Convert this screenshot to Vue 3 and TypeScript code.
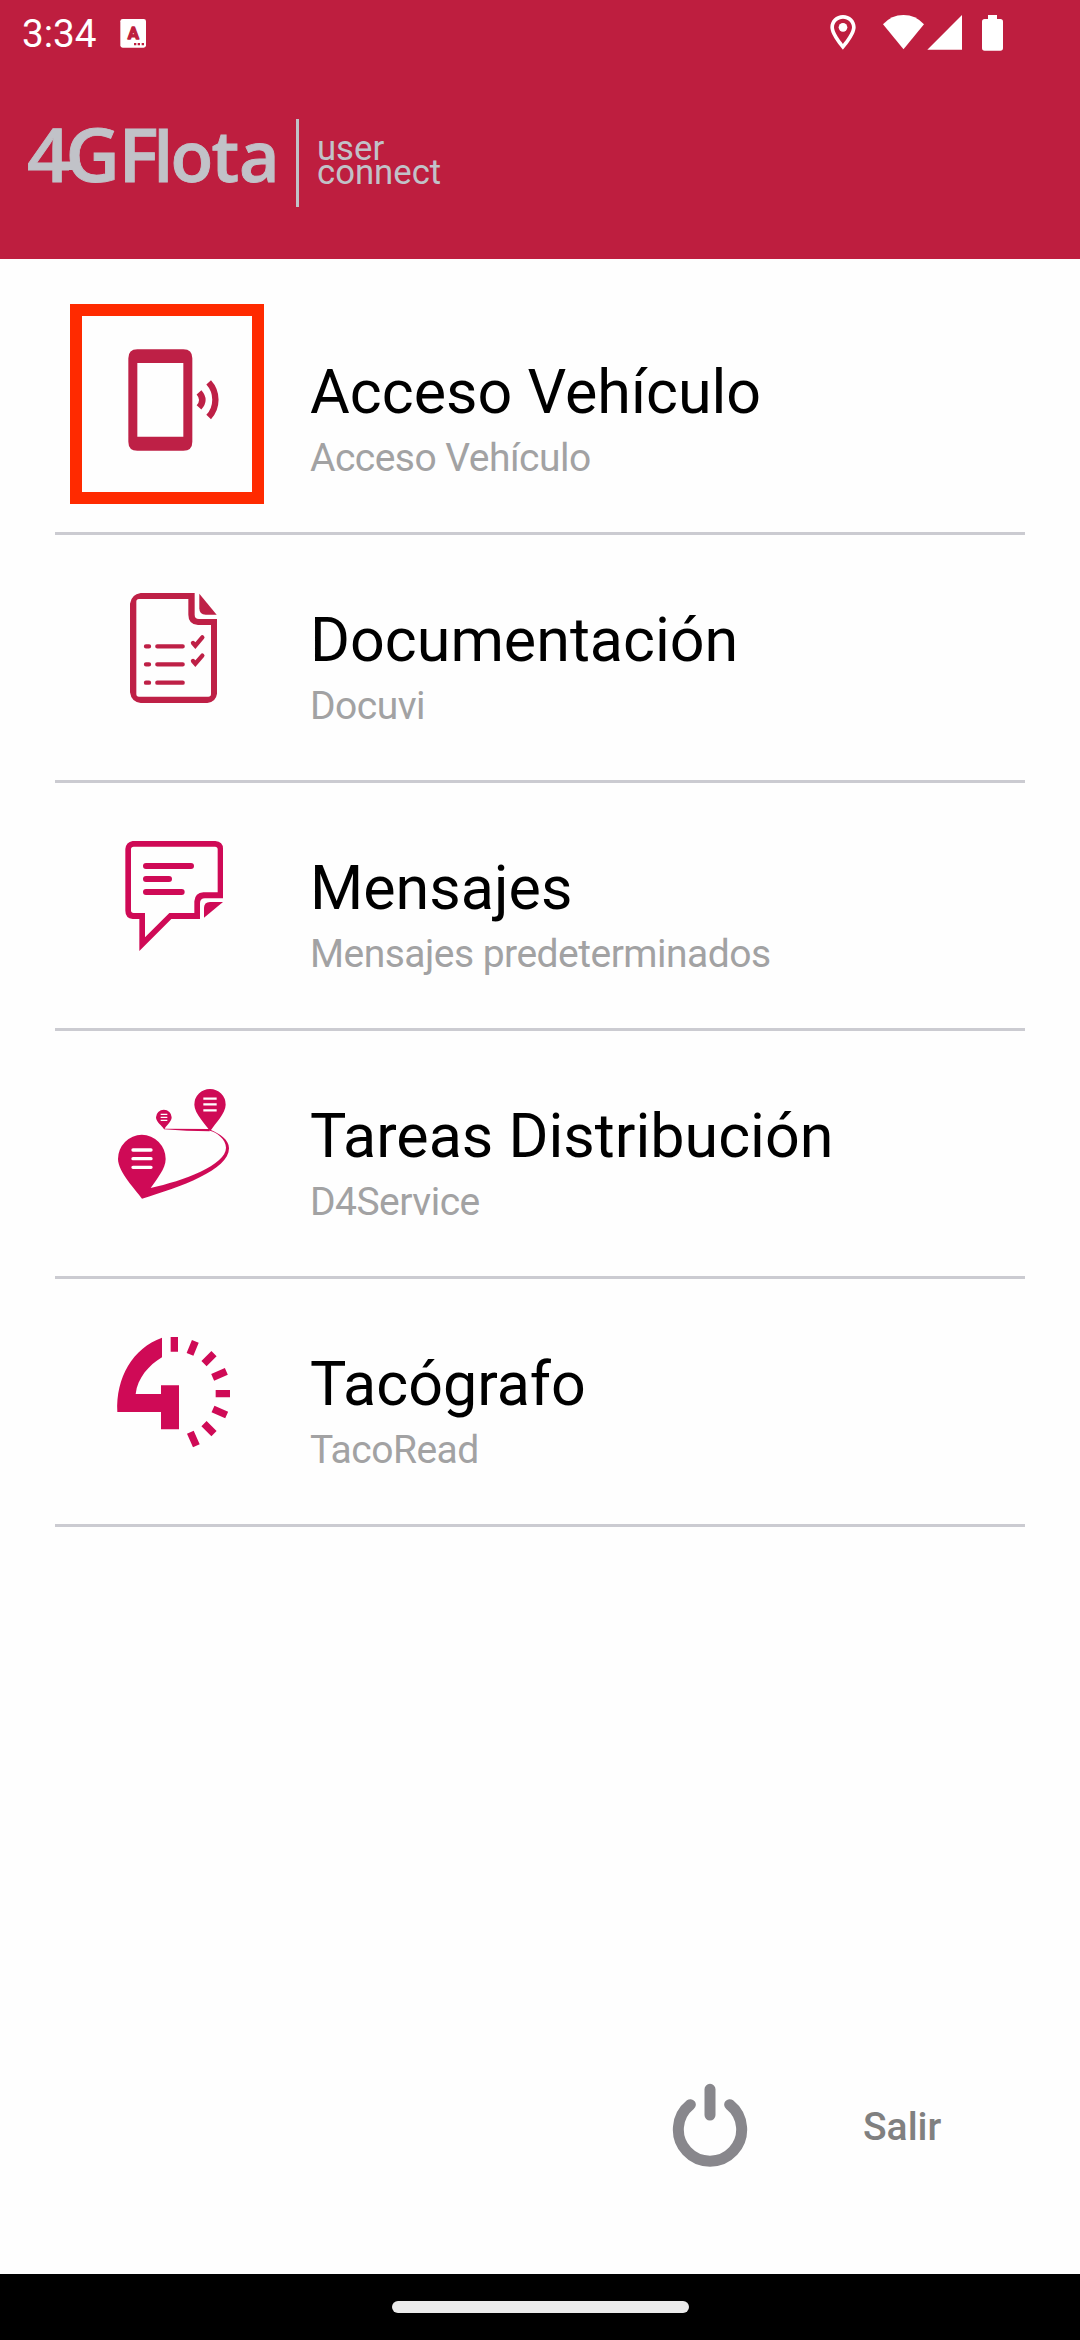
<script setup lang="ts">
interface MenuItem {
  icon: 'access' | 'document' | 'message' | 'route' | 'tacho'
  title: string
  subtitle: string
  highlighted?: boolean
}

const items: MenuItem[] = [
  { icon: 'access', title: 'Acceso Vehículo', subtitle: 'Acceso Vehículo', highlighted: true },
  { icon: 'document', title: 'Documentación', subtitle: 'Docuvi' },
  { icon: 'message', title: 'Mensajes', subtitle: 'Mensajes predeterminados' },
  { icon: 'route', title: 'Tareas Distribución', subtitle: 'D4Service' },
  { icon: 'tacho', title: 'Tacógrafo', subtitle: 'TacoRead' },
]

const viewBoxes: Record<MenuItem['icon'], string> = {
  access: '150 96 450 450',
  document: '0 0 450 450',
  message: '0 -6 450 450',
  route: '0 -12 450 450',
  tacho: '0 -18 450 450',
}
</script>

<template>
  <div class="screen">
    <header class="header">
      <div class="status">
        <div class="status-left">
          <span class="clock">3:34</span>
          <svg class="keyboard" viewBox="360 54 81 90">
            <rect x="361" y="57" width="77" height="86" rx="7" fill="#fff" />
            <text x="400" y="118" text-anchor="middle" class="key-letter">A</text>
            <path d="M402 129h7v7h-7zM413 129h7v7h-7zM425 129h7v7h-7z" fill="#be1e3f" />
          </svg>
        </div>
        <div class="status-right">
          <svg class="pin" viewBox="90 36 78 120">
            <path
              d="M129 45c-21 0-38 16-38 37 0 25 38 67 38 67s38-42 38-67c0-21-17-37-38-37zm0 11c15 0 27 11 27 26 0 17-27 50-27 50s-27-33-27-50c0-15 12-26 27-26z"
              fill="#fff"
            />
            <circle cx="129" cy="82" r="13" fill="#fff" />
          </svg>
          <svg class="wifi" viewBox="246 36 129 120">
            <path d="M249 73Q274 45 310.500 45Q347 45 372 73L310.500 148Z" fill="#fff" />
          </svg>
          <svg class="signal" viewBox="381 36 108 120"><path d="M382 149L486 45V149Z" fill="#fff" /></svg>
          <svg class="battery" viewBox="543 36 69 120">
            <path
              d="M564 45h27v12h10q8 0 8 8v79q0 8-8 8h-47q-8 0-8-8v-79q0-8 8-8h10z"
              fill="#fff"
            />
          </svg>
        </div>
      </div>
      <div class="brand">
        <svg class="logo" viewBox="0 -22 280 112">
          <text class="logo-caps" y="63" x="27 65.500 118.500">4GF</text>
          <text class="logo-small" y="63" x="153.500 170.500 211.500 239">lota</text>
          <rect x="55" y="42.500" width="20" height="8.500" />
        </svg>
        <div class="brand-sub">
          <span>user</span>
          <span>connect</span>
        </div>
      </div>
    </header>

    <main class="list">
      <div v-for="item in items" :key="item.title" class="row">
        <div v-if="item.highlighted" class="highlight"></div>
        <svg class="icon" :viewBox="viewBoxes[item.icon]">
          <g v-if="item.icon === 'access'" fill="#be2046">
            <path
              fill-rule="evenodd"
              d="M262 178H400Q427 178 427 205V455Q427 482 400 482H262Q235 482 235 455V205Q235 178 262 178ZM262 219V440H400V219Z"
            />
            <path
              d="M447 307Q467 330 447 352M476 277A77 77 0 0 1 476 381"
              fill="none"
              stroke="#be2046"
              stroke-width="19"
            />
          </g>
          <g v-else-if="item.icon === 'document'" fill="#be2046">
            <path
              fill-rule="evenodd"
              d="M122 69H284V134Q284 147 297 147H351V371Q348 395 322 399H122Q94 396 90 367V101Q94 73 122 69ZM117 87Q109 87 109 95V372Q109 380 117 380H325Q333 380 333 372V165H294Q265 163 265 134V87Z"
            />
            <path d="M298 71L350 134H317Q298 134 298 115Z" />
            <path
              d="M138 229H147M138 283H147M138 338H147M172 229H248M172 283H248M172 338H248"
              fill="none"
              stroke="#be2046"
              stroke-width="13"
              stroke-linecap="round"
            />
            <path
              d="M279 219L286 227L307 202M279 273L286 281L307 257"
              fill="none"
              stroke="#be2046"
              stroke-width="13"
              stroke-linecap="round"
            />
          </g>
          <g v-else-if="item.icon === 'message'" fill="#cf0a56">
            <path
              fill-rule="evenodd"
              d="M98 63H346Q369 65 369 86V235H315Q300 235 300 250V297H214L118 393V297H98Q76 294 76 272V87Q78 66 98 63ZM101 80Q93 80 93 88V271Q93 279 101 279H135V352L208 279H283V244Q285 218 310 217H353V88Q353 80 345 80Z"
            />
            <path d="M369 246L312 293V264Q312 246 330 246Z" />
            <path
              d="M138 138H273M138 177H207M138 216H245"
              fill="none"
              stroke="#cf0a56"
              stroke-width="18"
              stroke-linecap="round"
            />
          </g>
          <g v-else-if="item.icon === 'route'" fill="#cf0a56">
            <path
              d="M126 386C108 360 54 306 54 267A71 72 0 0 1 197 267C197 296 170 328 152 354C250 332 378 285 378 233C378 208 350 186 329 182C318 164 283 130 283 104A47 47 0 0 1 377 104C377 130 344 162 333 180C358 191 387 208 387 235C387 300 240 352 126 386Z"
            />
            <path
              d="M192 178C186 167 168 156 168 142A23.500 23 0 0 1 215 142C215 156 198 167 194 176L329 177V184L260 182Z"
            />
            <path
              d="M99 240H153M99 266H153M99 292H153"
              stroke="#fff"
              stroke-width="10"
              stroke-linecap="round"
            />
            <path d="M310 86H350M310 103H350M310 121H350" stroke="#fff" stroke-width="7" />
            <path d="M182 133H202M182 142H202M182 151H202" stroke="#fff" stroke-width="3.500" />
          </g>
          <g v-else fill="#cf0a56">
            <path d="M186 53V112C146 136 113 174 107 222H183V196H237V328H183V276H52C47 173 98 84 186 53Z" />
            <path
              d="M223 51V95M286 64L270 103M342 101L312 131M379 154L338 172M390 221H347M380 285L339 267M342 341L312 311M289 377L271 337"
              fill="none"
              stroke="#cf0a56"
              stroke-width="22"
            />
          </g>
        </svg>
        <div class="texts">
          <span class="title">{{ item.title }}</span>
          <span class="subtitle">{{ item.subtitle }}</span>
        </div>
      </div>
    </main>

    <footer class="footer">
      <svg class="power" viewBox="96 69 228 255">
        <path
          d="M210 88V165M151 134A95 95 0 1 0 269 134"
          fill="none"
          stroke="#88878c"
          stroke-width="33"
          stroke-linecap="round"
        />
      </svg>
      <span class="exit">Salir</span>
    </footer>
    <div class="navbar"><div class="pill"></div></div>
  </div>
</template>

<style>
body {
  margin: 0;
  background: #fefefe;
}
</style>

<style scoped>
.screen {
  display: flex;
  flex-direction: column;
  width: 1080px;
  height: 2340px;
  overflow: hidden;
  background: #fefefe;
  font-family: Roboto, sans-serif;
}
.header {
  box-sizing: border-box;
  height: 259px;
  flex: none;
  background: #be1e3f;
}
.status {
  display: flex;
  justify-content: space-between;
  height: 66px;
  padding: 0 76px 0 22px;
}
.status-left,
.status-right {
  display: flex;
}
.clock {
  width: 98px;
  padding-top: 11px;
  color: #fff;
  font-size: 38.700px;
  line-height: 46px;
}
.keyboard {
  width: 27px;
  height: 30px;
  margin-top: 18px;
}
.key-letter {
  font: 700 50px Roboto, sans-serif;
  fill: #be1e3f;
  stroke: #be1e3f;
  stroke-width: 4px;
  stroke-linejoin: round;
}
.status-right svg {
  height: 40px;
  margin-top: 12px;
}
.pin {
  width: 26px;
  margin-right: 26px;
}
.wifi {
  width: 43px;
  margin-right: 2px;
}
.signal {
  width: 36px;
  margin-right: 18px;
}
.battery {
  width: 23px;
}
.brand {
  display: flex;
  padding-top: 31px;
}
.logo {
  width: 280px;
  height: 112px;
  flex: none;
  overflow: visible;
  fill: #c1c2c8;
}
.logo text {
  stroke: #c1c2c8;
  stroke-width: 0.900px;
}
.logo-caps {
  font: 600 75px "Open Sans", sans-serif;
}
.logo-small {
  font: 600 70px "Open Sans", sans-serif;
}
.brand-sub {
  display: flex;
  flex-direction: column;
  box-sizing: border-box;
  height: 88px;
  margin: 22px 0 0 16px;
  padding: 18px 0 0 18px;
  border-left: 3px solid #c1c2c8;
  color: #c1c2c8;
  font-size: 34.700px;
  line-height: 23.500px;
}
.list {
  flex: 1;
  padding: 28px 55px 0;
}
.row {
  position: relative;
  display: flex;
  box-sizing: border-box;
  height: 248px;
  border-bottom: 3px solid #cbcbd1;
}
.highlight {
  position: absolute;
  top: 17px;
  left: 15px;
  box-sizing: border-box;
  width: 194px;
  height: 200px;
  border: 12px solid #ff2a00;
}
.icon {
  width: 150px;
  height: 150px;
  margin: 35px 60px 0 45px;
}
.texts {
  display: flex;
  flex-direction: column;
  padding-top: 69px;
}
.title {
  color: #000;
  font-size: 61px;
  line-height: 72px;
}
.subtitle {
  margin-top: 8px;
  color: #a2a2a3;
  font-size: 39px;
  letter-spacing: -0.520px;
  line-height: 44px;
}
.footer {
  display: flex;
  box-sizing: border-box;
  height: 214px;
  padding-left: 672px;
}
.power {
  width: 76px;
  height: 85px;
  margin-top: 23px;
}
.exit {
  margin: 44px 0 0 115px;
  color: #808080;
  font-size: 39px;
  font-weight: 500;
  line-height: 46px;
}
.navbar {
  display: flex;
  flex: none;
  justify-content: center;
  height: 66px;
  background: #000;
}
.pill {
  width: 297px;
  height: 12px;
  margin-top: 27px;
  border-radius: 6px;
  background: #ebebeb;
}
</style>
